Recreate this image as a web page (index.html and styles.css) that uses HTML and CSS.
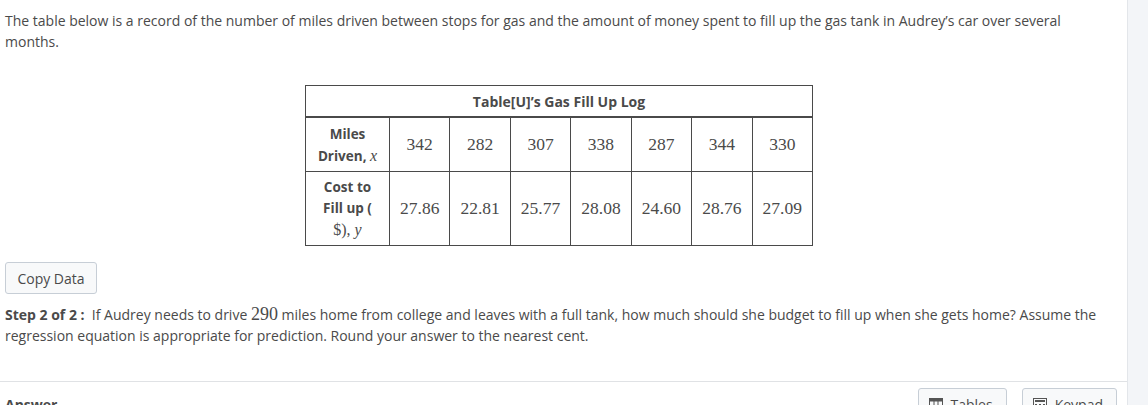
FILE: index.html
```html
<!DOCTYPE html>
<html>
<head>
<meta charset="utf-8">
<link rel="stylesheet" href="styles.css">
</head>
<body>
<div class="page">
  <div class="main">
    <div class="question">
      <p class="intro">The table below is a record of the number of miles driven between stops for gas and the amount of money spent to fill up the gas tank in Audrey’s car over several months.</p>
      <table class="log">
        <colgroup>
          <col class="c-head"><col><col><col><col><col><col><col>
        </colgroup>
        <tr><th class="title" colspan="8">Table[U]’s Gas Fill Up Log</th></tr>
        <tr class="r1">
          <th class="head">Miles<br>Driven, <i class="m">x</i></th>
          <td>342</td><td>282</td><td>307</td><td>338</td><td>287</td><td>344</td><td>330</td>
        </tr>
        <tr class="r2">
          <th class="head">Cost to<br>Fill up (<br><span class="m">$), <i>y</i></span></th>
          <td>27.86</td><td>22.81</td><td>25.77</td><td>28.08</td><td>24.60</td><td>28.76</td><td>27.09</td>
        </tr>
      </table>
      <button class="copy">Copy Data</button>
      <p class="step"><b>Step 2 of 2 :</b>&nbsp; If Audrey needs to drive <span class="num">290</span> miles home from college and leaves with a full tank, how much should she budget to fill up when she gets home? Assume the regression equation is appropriate for prediction. Round your answer to the nearest cent.</p>
    </div>
    <div class="answer-bar">
      <div class="answer-label">Answer</div>
      <div class="tools">
        <button class="tool">
          <svg width="14" height="12" viewBox="0 0 14 12"><rect x="0.5" y="0.5" width="13" height="11" fill="none" stroke="#555" stroke-width="1"/><rect x="0.5" y="0.5" width="13" height="3" fill="#555"/><line x1="5" y1="0" x2="5" y2="12" stroke="#555"/><line x1="9" y1="0" x2="9" y2="12" stroke="#555"/><line x1="0" y1="7.5" x2="14" y2="7.5" stroke="#555"/></svg>
          Tables
        </button>
        <button class="tool">
          <svg width="14" height="12" viewBox="0 0 14 12"><rect x="0.5" y="0.5" width="13" height="11" fill="none" stroke="#555" stroke-width="1"/><rect x="2" y="2" width="10" height="2" fill="#555"/><rect x="2" y="6" width="2" height="1.5" fill="#555"/><rect x="6" y="6" width="2" height="1.5" fill="#555"/><rect x="10" y="6" width="2" height="1.5" fill="#555"/></svg>
          Keypad
        </button>
      </div>
    </div>
  </div>
  <div class="side"></div>
</div>
</body>
</html>
```
FILE: styles.css
```css
html, body {
  margin: 0;
  padding: 0;
  background: #fff;
}
body {
  font-family: "Open Sans", "Liberation Sans", sans-serif;
  font-size: 14px;
  color: #4a4a4a;
}
.page {
  display: flex;
  width: 1148px;
  height: 405px;
  overflow: hidden;
}
.main {
  width: 1127px;
  flex: none;
  border-right: 1px solid #e3e6ea;
}
.side {
  flex: 1;
  background: #f3f5f8;
}
.question {
  padding: 10px 5px 0 5px;
}
.intro {
  margin: 0;
  line-height: 21px;
  padding-right: 40px;
}
.log {
  border-collapse: collapse;
  table-layout: fixed;
  width: 508px;
  margin: 33px 0 0 300px;
  border: 1px solid #4a4a4a;
  color: #4a4a4a;
}
.c-head {
  width: 84px;
}
.log th, .log td {
  border: 1px solid #4a4a4a;
  padding: 0;
  text-align: center;
}
.log .title {
  height: 30px;
  font-weight: 700;
  font-size: 14px;
  border-bottom: 2px solid #4a4a4a;
}
.log .head {
  font-weight: 700;
  font-size: 13.5px;
}
.r1 .head {
  line-height: 22px;
  height: 53px;
}
.r2 .head {
  line-height: 21px;
  height: 73px;
}
.log td {
  font-family: "Liberation Serif", "Times New Roman", serif;
  font-size: 17.5px;
}
.m {
  font-family: "Liberation Serif", "Times New Roman", serif;
  font-size: 16px;
  font-weight: 400;
}
.copy {
  display: block;
  margin-top: 16px;
  width: 92px;
  height: 32px;
  padding: 0;
  font-family: "Open Sans", "Liberation Sans", sans-serif;
  font-size: 14px;
  color: #4a4a4a;
  background: #f8f9fa;
  border: 1px solid #c7ced6;
  border-radius: 3px;
}
.step {
  margin: 10px 0 0 0;
  line-height: 21px;
  padding-right: 20px;
}
.step b {
  font-weight: 700;
}
.num {
  font-family: "Liberation Serif", "Times New Roman", serif;
  font-size: 18px;
}
.answer-bar {
  margin-top: 35px;
  border-top: 1px solid #e0e2e5;
  display: flex;
  justify-content: space-between;
  align-items: flex-start;
  padding: 6px 10px 0 5px;
}
.answer-label {
  font-weight: 700;
  margin-top: 7px;
}
.tools {
  display: flex;
  gap: 15px;
}
.tool {
  display: flex;
  align-items: center;
  gap: 8px;
  height: 32px;
  padding: 0 13px 0 10px;
  font-family: "Open Sans", "Liberation Sans", sans-serif;
  font-size: 14px;
  color: #4a4a4a;
  background: #f8f9fa;
  border: 1px solid #c7ced6;
  border-radius: 3px;
}
```
